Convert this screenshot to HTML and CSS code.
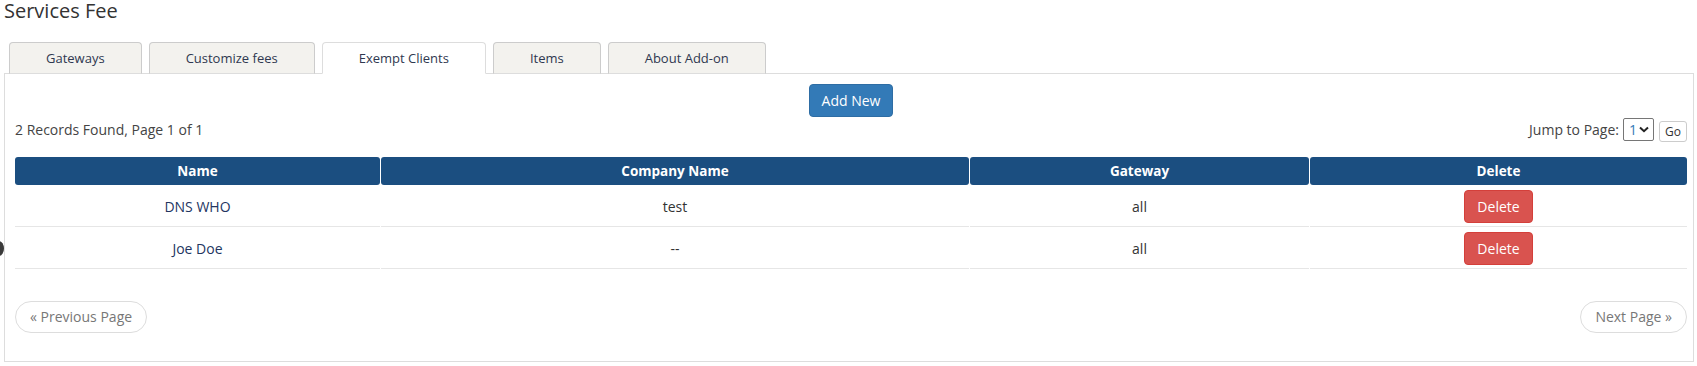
FILE: index.html
```html
<!DOCTYPE html>
<html lang="en">
<head>
    <meta charset="UTF-8">
    <title>Services Fee</title>
    <link rel="stylesheet" href="styles.css">
</head>
<body>
<span class="edge-dot"></span>
<h1 class="page-title">Services Fee</h1>
<ul class="tabs">
    <li>Gateways</li>
    <li>Customize fees</li>
    <li class="active">Exempt Clients</li>
    <li>Items</li>
    <li>About Add-on</li>
</ul>
<div class="tab-content">
    <div class="actions">
        <button class="btn btn-primary">Add New</button>
    </div>
    <div class="records">
        <span>2 Records Found, Page 1 of 1</span>
        <div class="jump">
            Jump to Page:
            <span class="select">1 <svg width="10" height="7" viewBox="0 0 10 7"><path d="M1 1.5 L5 5.2 L9 1.5" fill="none" stroke="#222" stroke-width="2"/></svg></span>
            <button class="btn-go">Go</button>
        </div>
    </div>
    <table class="datatable">
        <thead>
        <tr>
            <th class="c-name">Name</th>
            <th class="c-company">Company Name</th>
            <th class="c-gateway">Gateway</th>
            <th>Delete</th>
        </tr>
        </thead>
        <tbody>
        <tr>
            <td class="name">DNS WHO</td>
            <td>test</td>
            <td>all</td>
            <td><button class="btn btn-danger">Delete</button></td>
        </tr>
        <tr>
            <td class="name">Joe Doe</td>
            <td>--</td>
            <td>all</td>
            <td><button class="btn btn-danger">Delete</button></td>
        </tr>
        </tbody>
    </table>
    <div class="pager">
        <span class="pill">&laquo; Previous Page</span>
        <span class="pill">Next Page &raquo;</span>
    </div>
</div>
</body>
</html>
```
FILE: styles.css
```css
* {
    margin: 0;
    padding: 0;
    box-sizing: border-box;
    list-style: none;
}

body {
    padding: 0 3px 0 4px;
    font-family: "Open Sans", "Liberation Sans", sans-serif;
    font-size: 14px;
    color: #333;
    background: #fff;
}

.edge-dot {
    position: absolute;
    left: -6px;
    top: 241px;
    width: 10px;
    height: 15px;
    border-radius: 50%;
    background: #3a3a3a;
}

.page-title {
    font-size: 20px;
    font-weight: normal;
    line-height: 22px;
    color: #333;
}

.tabs {
    display: flex;
    gap: 7px;
    margin: 20px 0 -1px 5px;
}

.tabs li {
    position: relative;
    height: 32px;
    line-height: 30px;
    padding: 0 36px;
    font-size: 13px;
    border: 1px solid #ccc;
    border-bottom-color: #ddd;
    border-radius: 4px 4px 0 0;
    background: #f3f2ee;
    color: #2f3850;
}

.tabs li.active {
    background: #fff;
    border-color: #ddd;
    border-bottom-color: #fff;
}

.tab-content {
    border: 1px solid #ddd;
    padding: 10px 6px 10px 10px;
}

.actions {
    display: flex;
    justify-content: center;
}

.btn {
    font-family: inherit;
    font-size: 14px;
    line-height: 19px;
    padding: 6px 12px;
    border: 1px solid transparent;
    border-radius: 4px;
    color: #fff;
    cursor: pointer;
}

.btn-primary {
    background: #337ab7;
    border-color: #2e6da4;
}

.btn-danger {
    background: #d9534f;
    border-color: #d43f3a;
}

.records {
    display: flex;
    justify-content: space-between;
    align-items: center;
    height: 25px;
    color: #444;
}

.jump {
    display: flex;
    align-items: center;
    gap: 4px;
}

.select {
    display: inline-flex;
    align-items: center;
    justify-content: space-between;
    width: 31px;
    height: 23px;
    padding: 0 4px 0 5px;
    border: 1px solid #767676;
    border-radius: 2px;
    color: #337ab7;
    font-size: 14px;
}

.btn-go {
    width: 28px;
    height: 21px;
    margin-top: 3px;
    margin-left: 1px;
    border: 1px solid #ccc;
    border-radius: 3px;
    background: #fff;
    font-family: inherit;
    font-size: 12px;
    color: #333;
}

.datatable {
    width: calc(100% + 2px);
    margin: 15px -1px 0;
    border-collapse: separate;
    border-spacing: 1px 0;
    table-layout: fixed;
}

.datatable th {
    height: 28px;
    font-size: 13.5px;
    background: #1b4e80;
    color: #fff;
    font-weight: bold;
    border-radius: 3px;
}

.datatable .c-name {
    width: 365px;
}

.datatable .c-company {
    width: 588px;
}

.datatable .c-gateway {
    width: 339px;
}

.datatable td {
    height: 42px;
    padding-top: 1px;
    text-align: center;
    vertical-align: middle;
    border-bottom: 1px solid #e6e6e6;
    color: #333;
}

.datatable td.name {
    color: #23355f;
}

.pager {
    display: flex;
    justify-content: space-between;
    margin: 32px 0 18px;
}

.pill {
    padding: 5px 14px;
    line-height: 20px;
    font-size: 14px;
    border: 1px solid #ddd;
    border-radius: 16px;
    color: #777;
}
```
